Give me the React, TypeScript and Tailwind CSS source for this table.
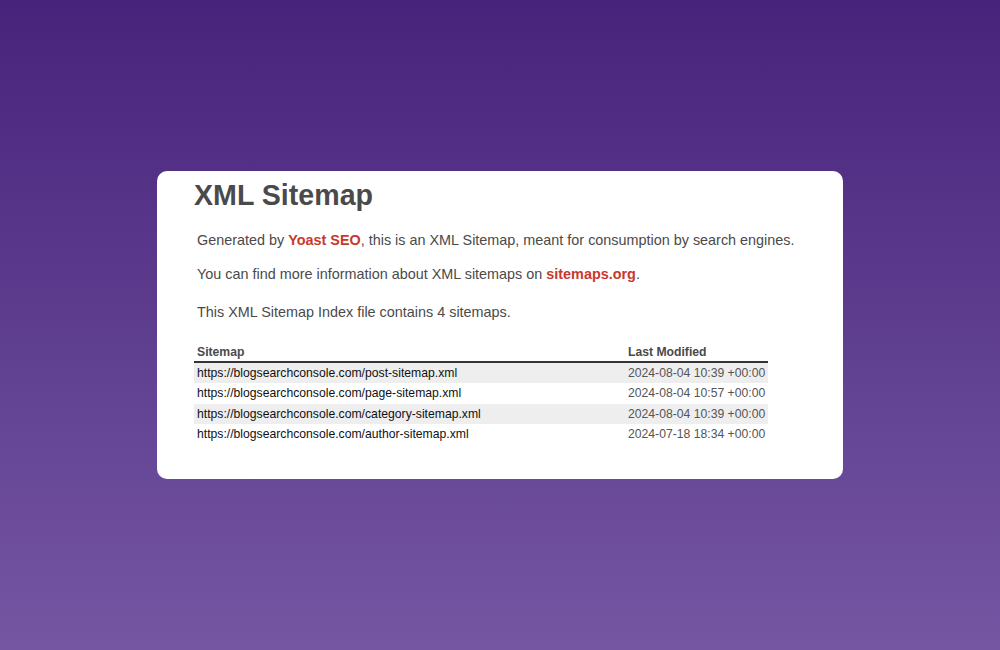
import React from "react";

const rows = [
  ["https://blogsearchconsole.com/post-sitemap.xml", "2024-08-04 10:39 +00:00"],
  ["https://blogsearchconsole.com/page-sitemap.xml", "2024-08-04 10:57 +00:00"],
  ["https://blogsearchconsole.com/category-sitemap.xml", "2024-08-04 10:39 +00:00"],
  ["https://blogsearchconsole.com/author-sitemap.xml", "2024-07-18 18:34 +00:00"],
];

export default function App() {
  return (
    <div
      className="w-[1000px] h-[650px] flex items-center justify-center bg-gradient-to-b from-[#48237b] to-[#7556a3]"
      style={{ fontFamily: '"Liberation Sans", Arial, sans-serif' }}
    >
      <div className="w-[686px] h-[308px] bg-white rounded-[10px] pl-[37px] pt-[6px] flex flex-col">
        <h1 className="text-[28.6px] font-bold text-[#4a4a4a] leading-[36px]">XML Sitemap</h1>
        <p className="mt-[18px] ml-[3px] text-[14.4px] text-[#4a4a4a] leading-[18px]">
          Generated by <span className="font-bold text-[#c8392b]">Yoast SEO</span>, this is an XML Sitemap, meant for consumption by search engines.
        </p>
        <p className="mt-[16px] ml-[3px] text-[14.4px] text-[#4a4a4a] leading-[18px]">
          You can find more information about XML sitemaps on <span className="font-bold text-[#c8392b]">sitemaps.org</span>.
        </p>
        <p className="mt-[20px] ml-[3px] text-[14.4px] text-[#4a4a4a] leading-[18px]">
          This XML Sitemap Index file contains 4 sitemaps.
        </p>
        <div className="mt-[22px] w-[574px] text-[12.2px]">
          <div className="flex border-b-2 border-[#333] h-[20px] items-center">
            <div className="w-[431px] pl-[3px] font-bold text-[#4a4a4a]">Sitemap</div>
            <div className="pl-[3px] font-bold text-[#4a4a4a]">Last Modified</div>
          </div>
          {rows.map((r, i) => (
            <div key={i} className={`flex h-[20.3px] items-center ${i % 2 === 0 ? "bg-[#eee]" : ""}`}>
              <div className="w-[431px] pl-[3px] text-[#111]">{r[0]}</div>
              <div className="pl-[3px] text-[#555]">{r[1]}</div>
            </div>
          ))}
        </div>
      </div>
    </div>
  );
}
